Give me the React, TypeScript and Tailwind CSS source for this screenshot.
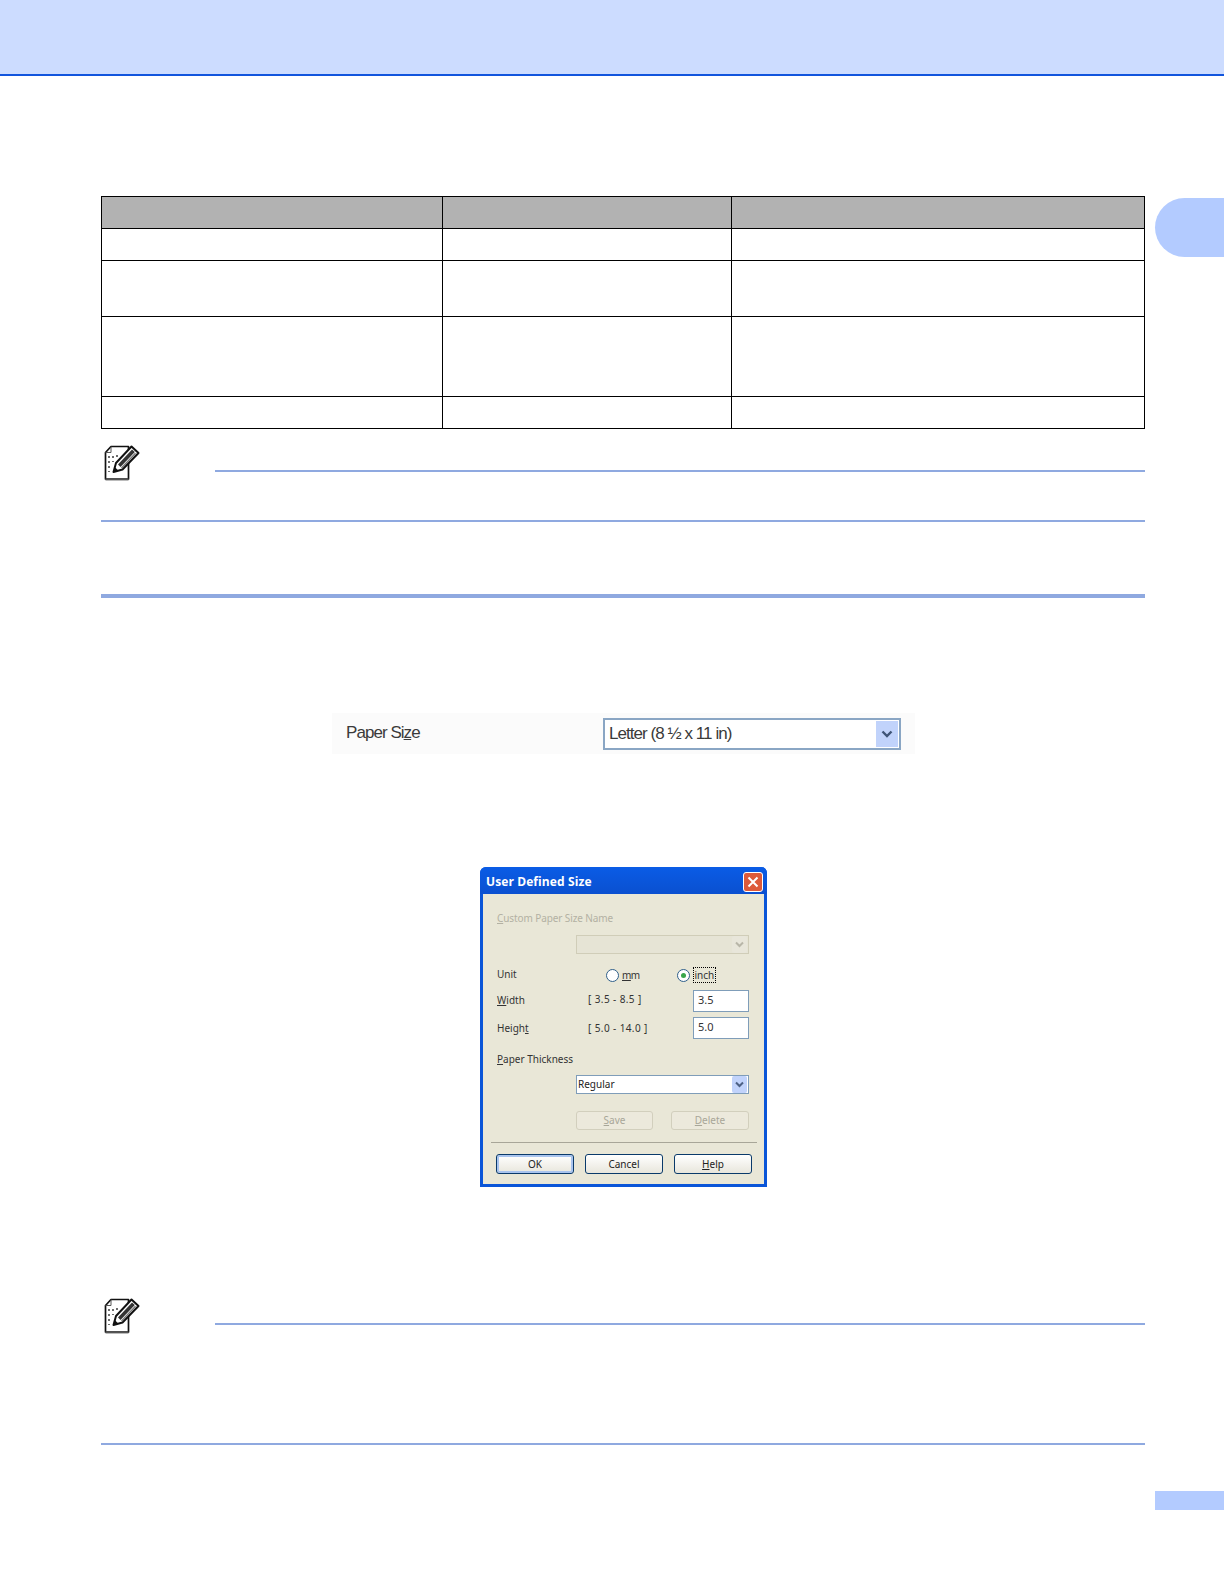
import React from "react";

function NoteIcon() {
  return (
    <svg width="37" height="38" viewBox="0 0 37 38" className="block shrink-0">
      <path d="M8 2.5H25.5V35H2.5V8.5Z" fill="#fff" stroke="#111" strokeWidth="1.7" strokeLinejoin="round" />
      <path d="M2.5 35.4H25.5" stroke="#555" strokeWidth="2" />
      <path d="M8 2.5V8.5H2.5" fill="none" stroke="#555" strokeWidth="1" />
      <path d="M6 12v2M6 17v2M6 22v2M6 27v1M10 12v2M10 17v1M14 11v2" stroke="#666" strokeWidth="1.9" />
      <path d="M10.5 28L13 19L28.5 2.5L35.5 9L19.5 25.5Z" fill="#fff" stroke="#111" strokeWidth="2" strokeLinejoin="round" />
      <path d="M15 20.5L29 5.5L31.8 8L17.5 23Z" fill="#333" />
      <path d="M18 23.5L32 8.7L33 9.7L19 24.5Z" fill="#777" />
      <path d="M10.5 28L11.8 23L15.5 26.8Z" fill="#111" />
    </svg>
  );
}

function Note({ bodyHeight }: { bodyHeight: string }) {
  return (
    <div className={`border-b-2 border-[#8fa9e0] ${bodyHeight}`}>
      <div className="flex items-start">
        <div className="w-[114px] pl-[2px]">
          <NoteIcon />
        </div>
        <div className="flex-1 mt-[26px] h-[2px] bg-[#8fa9e0]" />
      </div>
    </div>
  );
}

function Chevron({ color = "#4d6185", bg = "#c1d3fb" }: { color?: string; bg?: string }) {
  return (
    <div className="w-[15px] h-[17px] flex items-center justify-center rounded-[2px]" style={{ background: bg }}>
      <svg width="9" height="7" viewBox="0 0 9 7">
        <path d="M1 1.5L4.5 5L8 1.5" fill="none" stroke={color} strokeWidth="2" />
      </svg>
    </div>
  );
}

function U({ children }: { children: React.ReactNode }) {
  return <span className="underline underline-offset-1">{children}</span>;
}

function Radio({ checked }: { checked?: boolean }) {
  return (
    <div className="w-[13px] h-[13px] rounded-full border border-[#2f5f8a] bg-white flex items-center justify-center shrink-0">
      {checked && <div className="w-[5px] h-[5px] rounded-full bg-[#3aa64a]" />}
    </div>
  );
}

function DlgButton({ children, primary }: { children: React.ReactNode; primary?: boolean }) {
  return (
    <div
      className={`w-[78px] h-[20px] shrink-0 rounded-[3px] border border-[#0a3a6a] bg-gradient-to-b from-white to-[#e8e6dc] flex items-center justify-center text-[10px] text-[#222] ${
        primary ? "shadow-[inset_0_0_0_2px_#a9c4ee]" : ""
      }`}
    >
      {children}
    </div>
  );
}

function DisabledButton({ children, w }: { children: React.ReactNode; w: string }) {
  return (
    <div className={`${w} h-[19px] shrink-0 rounded-[3px] border border-[#d2cfbd] bg-[#ece9dc] flex items-center justify-center text-[10px] text-[#a8a698]`}>
      {children}
    </div>
  );
}

function Dialog() {
  return (
    <div
      className="w-[287px] h-[320px] rounded-t-[6px] bg-[#0a55d8] flex flex-col overflow-hidden text-[10px] text-[#333]"
      style={{ fontFamily: '"Noto Sans", Tahoma, sans-serif' }}
    >
      <div className="h-[27px] shrink-0 bg-gradient-to-b from-[#0a5ce6] to-[#0a50d0] flex items-center justify-between pl-[6px] pr-[4px] pt-[2px]">
        <span className="text-white font-bold text-[12px] tracking-[0.1px]" style={{ fontFamily: '"Open Sans", sans-serif' }}>
          User Defined Size
        </span>
        <div className="w-[20px] h-[20px] rounded-[3px] border border-white bg-[#dd5a3a] flex items-center justify-center">
          <svg width="12" height="12" viewBox="0 0 12 12">
            <path d="M1.5 1.5L10.5 10.5M10.5 1.5L1.5 10.5" stroke="#fff" strokeWidth="2" />
          </svg>
        </div>
      </div>
      <div className="flex-1 mx-[3px] mb-[3px] bg-[#e9e7d7] flex flex-col pl-[14px]">
        <div className="h-[14px] mt-[17px] flex items-center text-[#b3b1a3] tracking-[-0.1px]">
          <span><U>C</U>ustom Paper Size Name</span>
        </div>
        <div className="ml-[79px] w-[173px] h-[19px] mt-[10px] border border-[#d0cdb8] bg-[#e6e4d5] flex items-center justify-end pr-[1px]">
          <Chevron color="#b8b6a8" bg="#e8e6da" />
        </div>
        <div className="flex items-center h-[16px] mt-[13px]">
          <span className="w-[101px] -mt-[2px]">Unit</span>
          <div className="w-[8px]" />
          <Radio />
          <span className="ml-[3px] w-[55px] tracking-[-0.5px]"><U>m</U>m</span>
          <Radio checked />
          <span className="ml-[3px] px-[0.5px] border border-dotted border-black leading-[14px]">inch</span>
        </div>
        <div className="flex items-center h-[22px] mt-[7px]">
          <span className="w-[91px] -mt-[2px]"><U>W</U>idth</span>
          <span className="w-[105px] -mt-[3px] tracking-[0.4px]">[ 3.5 - 8.5 ]</span>
          <div className="w-[56px] h-[22px] border border-[#7f9db9] bg-white pl-[4px] flex items-center text-[11px] pb-[1px]">3.5</div>
        </div>
        <div className="flex items-center h-[22px] mt-[5px]">
          <span className="w-[91px] mt-[1px]">Heigh<U>t</U></span>
          <span className="w-[105px] tracking-[0.4px]">[ 5.0 - 14.0 ]</span>
          <div className="w-[56px] h-[22px] border border-[#7f9db9] bg-white pl-[4px] flex items-center text-[11px] pb-[2px]">5.0</div>
        </div>
        <div className="h-[14px] mt-[13px] flex items-center"><span><U>P</U>aper Thickness</span></div>
        <div className="ml-[79px] w-[173px] h-[19px] mt-[9px] border border-[#7f9db9] bg-white flex items-center justify-between pl-[1px] pr-[1px] text-[#222]">
          <span>Regular</span>
          <Chevron />
        </div>
        <div className="ml-[79px] flex gap-[18px] mt-[17px]">
          <DisabledButton w="w-[77px]"><U>S</U>ave</DisabledButton>
          <DisabledButton w="w-[78px]"><U>D</U>elete</DisabledButton>
        </div>
        <div className="h-[1px] bg-[#a8a698] -ml-[6px] mt-[12px] w-[266px]" />
        <div className="flex gap-[11px] -ml-[1px] mt-[11px]">
          <DlgButton primary>OK</DlgButton>
          <DlgButton>Cancel</DlgButton>
          <DlgButton><U>H</U>elp</DlgButton>
        </div>
      </div>
    </div>
  );
}

function PaperSizeBar() {
  return (
    <div
      className="w-[583px] h-[41px] bg-[#fbfbfb] flex items-center pl-[14px] text-[#3a3a3a]"
      style={{ fontFamily: '"Liberation Sans", Arial, sans-serif' }}
    >
      <span className="w-[257px] text-[17px] tracking-[-0.95px] -mt-[1px]">
        Paper Si<U>z</U>e
      </span>
      <div className="w-[298px] h-[32px] border-2 border-[#8aa6c4] bg-white flex items-center justify-between pl-[4px] pr-[1px] text-[17px] tracking-[-0.95px]">
        <span>Letter (8 ½ x 11 in)</span>
        <div className="w-[22px] h-[26px] bg-[#c1d3fb] flex items-center justify-center">
          <svg width="12" height="8" viewBox="0 0 12 8">
            <path d="M1.5 1.5L6 6L10.5 1.5" fill="none" stroke="#3f5577" strokeWidth="2.4" />
          </svg>
        </div>
      </div>
    </div>
  );
}

export default function App() {
  return (
    <div className="w-[1224px] h-[1584px] bg-white flex flex-col overflow-hidden">
      <header className="h-[76px] shrink-0 bg-[#ccdcff] border-b-2 border-[#1155dd]" />
      <div className="flex flex-1">
        <main className="ml-[101px] w-[1044px] shrink-0 pt-[120px] flex flex-col">
          <table className="w-[1044px] table-fixed border-collapse border border-black">
            <colgroup>
              <col className="w-[341px]" />
              <col className="w-[289px]" />
              <col />
            </colgroup>
            <tbody>
              <tr className="h-[32px] bg-[#b2b2b2]">
                <td className="border border-black" />
                <td className="border border-black" />
                <td className="border border-black" />
              </tr>
              <tr className="h-[32px]">
                <td className="border border-black" />
                <td className="border border-black" />
                <td className="border border-black" />
              </tr>
              <tr className="h-[56px]">
                <td className="border border-black" />
                <td className="border border-black" />
                <td className="border border-black" />
              </tr>
              <tr className="h-[80px]">
                <td className="border border-black" />
                <td className="border border-black" />
                <td className="border border-black" />
              </tr>
              <tr className="h-[32px]">
                <td className="border border-black" />
                <td className="border border-black" />
                <td className="border border-black" />
              </tr>
            </tbody>
          </table>
          <div className="mt-[15px]">
            <Note bodyHeight="h-[78px]" />
          </div>
          <div className="mt-[72px] h-[4px] bg-[#8fa9e0]" />
          <div className="mt-[115px] ml-[231px]">
            <PaperSizeBar />
          </div>
          <div className="mt-[113px] ml-[379px]">
            <Dialog />
          </div>
          <div className="mt-[110px]">
            <Note bodyHeight="h-[148px]" />
          </div>
        </main>
        <aside className="ml-[10px] flex-1 flex flex-col pt-[122px]">
          <div className="h-[59px] bg-[#b3cbff] rounded-l-[30px]" />
          <div className="mt-[1234px] h-[19px] bg-[#b3cbff]" />
        </aside>
      </div>
    </div>
  );
}
